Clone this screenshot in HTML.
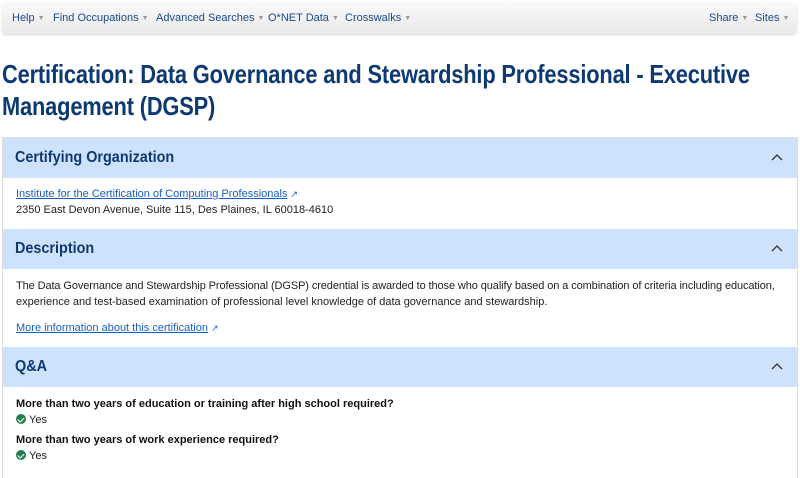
<!DOCTYPE html>
<html><head><style>
body{margin:0;width:800px;height:464px;overflow:hidden;background:#fff;font-family:"Liberation Sans",sans-serif;font-size:11px;color:#222}
.nav{position:absolute;left:2px;top:2px;width:795px;height:32px;border-radius:4px;background:linear-gradient(#fafafa,#e9e9e9);box-shadow:0 1px 2px rgba(0,0,0,.15)}
.nav span{position:absolute;top:10px;color:#1c4a8a;font-size:11px;white-space:nowrap}
.nav span i{font-style:normal;color:#999;font-size:7px;margin-left:3px;vertical-align:1px}
h1{position:absolute;left:2px;top:58px;margin:0;font-size:26px;line-height:32px;color:#0d3a72;font-weight:bold;letter-spacing:-0.2px;transform:scaleX(.84);transform-origin:left;white-space:nowrap}
.card{position:absolute;left:2px;top:137px;width:794px;height:340px;border:1px solid #ddd;border-bottom:none}
.hd{position:absolute;left:0;width:794px;height:40px;background:#cfe2fb}
.hd b{position:absolute;left:12px;top:11px;font-size:16px;color:#0d3a72;transform:scaleX(.9);transform-origin:left}
.hd svg{position:absolute;right:14px;top:15px}
.t{position:absolute;left:13px;white-space:nowrap}
a{color:#1a5fc0;text-decoration:underline}
.q{font-weight:bold;color:#111}
.ck{display:inline-block;width:10px;height:10px;border-radius:50%;background:#1e7e4c;vertical-align:-1px;margin-right:3px;position:relative}
.ck:after{content:"";position:absolute;left:3px;top:1.5px;width:2.5px;height:5px;border:solid #fff;border-width:0 1.5px 1.5px 0;transform:rotate(45deg)}
</style></head><body>
<div class="nav">
<span style="left:10px">Help<i>▼</i></span>
<span style="left:51px">Find Occupations<i>▼</i></span>
<span style="left:154px">Advanced Searches<i>▼</i></span>
<span style="left:266px">O*NET Data<i>▼</i></span>
<span style="left:343px">Crosswalks<i>▼</i></span>
<span style="left:707px">Share<i>▼</i></span>
<span style="left:753px">Sites<i>▼</i></span>
</div>
<h1>Certification: Data Governance and Stewardship Professional - Executive<br>Management (DGSP)</h1>
<div class="card">
<div class="hd" style="top:0"><b>Certifying Organization</b><svg width="12" height="8"><path d="M1 7L6 2L11 7" stroke="#333" fill="none" stroke-width="1.3"/></svg></div>
<div class="t" style="top:50px"><a>Institute for the Certification of Computing Professionals</a> <span style="color:#1a5fc0;font-size:9px">↗</span></div>
<div class="t" style="top:66px">2350 East Devon Avenue, Suite 115, Des Plaines, IL 60018-4610</div>
<div class="hd" style="top:91px"><b>Description</b><svg width="12" height="8"><path d="M1 7L6 2L11 7" stroke="#333" fill="none" stroke-width="1.3"/></svg></div>
<div class="t" style="top:142px;letter-spacing:-0.1px">The Data Governance and Stewardship Professional (DGSP) credential is awarded to those who qualify based on a combination of criteria including education,</div>
<div class="t" style="top:158px">experience and test-based examination of professional level knowledge of data governance and stewardship.</div>
<div class="t" style="top:184px"><a>More information about this certification</a> <span style="color:#1a5fc0;font-size:9px">↗</span></div>
<div class="hd" style="top:209px"><b>Q&amp;A</b><svg width="12" height="8"><path d="M1 7L6 2L11 7" stroke="#333" fill="none" stroke-width="1.3"/></svg></div>
<div class="t q" style="top:260px">More than two years of education or training after high school required?</div>
<div class="t" style="top:276px"><span class="ck"></span>Yes</div>
<div class="t q" style="top:296px">More than two years of work experience required?</div>
<div class="t" style="top:312px"><span class="ck"></span>Yes</div>
</div>
</body></html>
